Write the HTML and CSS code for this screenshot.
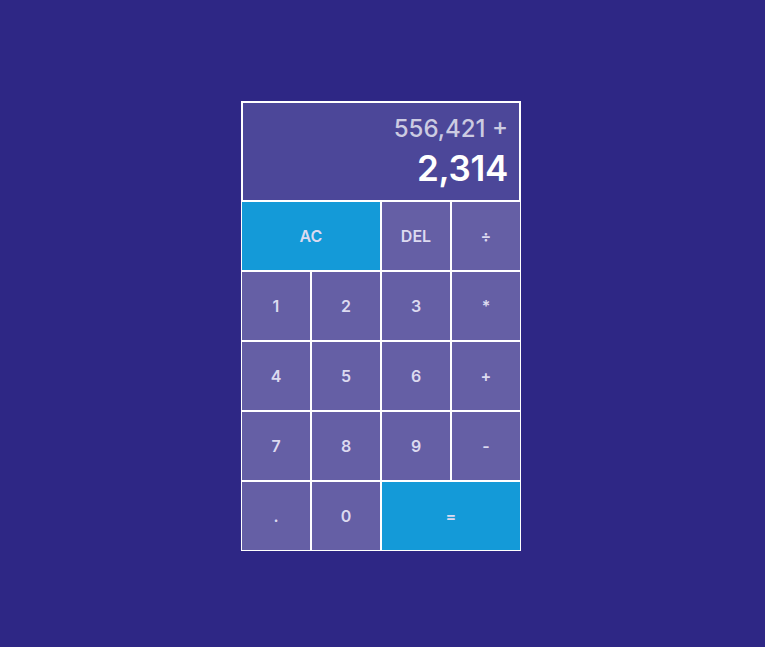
FILE: index.html
```html
<!DOCTYPE html>
<html lang="en">
<head>
<meta charset="utf-8">
<title>Calculator</title>
<link rel="stylesheet" href="styles.css">
</head>
<body>
<div class="calculator">
  <div class="output">
    <div class="previous">556,421 +</div>
    <div class="current">2,314</div>
  </div>
  <button class="key wide accent">AC</button>
  <button class="key">DEL</button>
  <button class="key">÷</button>
  <button class="key">1</button>
  <button class="key">2</button>
  <button class="key">3</button>
  <button class="key">*</button>
  <button class="key">4</button>
  <button class="key">5</button>
  <button class="key">6</button>
  <button class="key">+</button>
  <button class="key">7</button>
  <button class="key">8</button>
  <button class="key">9</button>
  <button class="key">-</button>
  <button class="key">.</button>
  <button class="key">0</button>
  <button class="key wide accent">=</button>
</div>
</body>
</html>
```
FILE: styles.css
```css
* { box-sizing: border-box; }
html, body { margin: 0; padding: 0; }
body {
  background: #2e2785;
  width: 765px;
  height: 647px;
  font-family: Inter, "DejaVu Sans", sans-serif;
}
.calculator {
  display: grid;
  grid-template-columns: repeat(4, 70px);
  grid-template-rows: 100px repeat(5, 70px);
  justify-content: start;
  padding-top: 101px;
  padding-left: 241px;
}
.output {
  grid-column: 1 / -1;
  background: #4c4799;
  border: 2px solid #fff;
  border-bottom-width: 1px;
  display: flex;
  flex-direction: column;
  align-items: flex-end;
  justify-content: space-between;
  padding: 13px 11px 13px 10px;
}
.previous {
  color: rgba(255,255,255,0.72);
  font-size: 24px;
  font-weight: 500;
  line-height: 26px;
  letter-spacing: 0;
}
.current {
  color: #fff;
  font-size: 35px;
  font-weight: 600;
  line-height: 38px;
  letter-spacing: -0.3px;
}
.key {
  font-family: inherit;
  background: #655fa5;
  border: 1px solid #fff;
  color: #dcdaf0;
  font-size: 16px;
  font-weight: 600;
  padding: 0;
  margin: 0;
  outline: none;
}
.wide { grid-column: span 2; }
.accent { background: #149ad8; }
```
